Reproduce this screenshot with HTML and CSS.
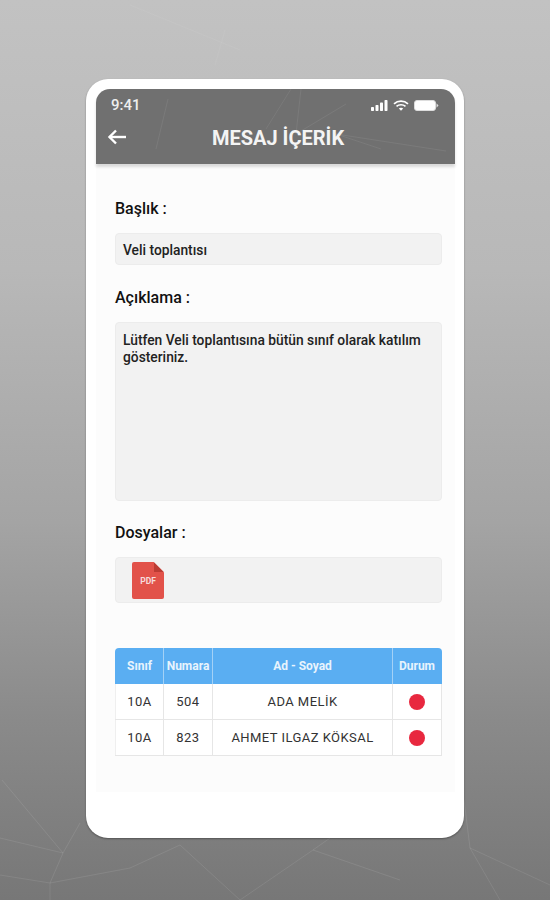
FILE: index.html
```html
<!DOCTYPE html>
<html lang="tr">

<head>
    <meta charset="UTF-8">
    <meta name="viewport" content="width=device-width, initial-scale=1.0">
    <title>Mesaj İçerik</title>
    <link rel="stylesheet" href="styles.css">
</head>

<body>
    <!-- faint web of lines on the backdrop -->
    <svg class="backdrop-lines" width="550" height="900" viewBox="0 0 550 900" fill="none" stroke="#fff" stroke-opacity="0.09">
        <path d="M2 780 L63 853 L80 823" />
        <path d="M0 838 L63 853 L50 883 L50 900" />
        <path d="M0 875 L50 883 L130 868" />
        <path d="M240 900 L313 850 L400 880 M130 868 L180 845 L240 900 M313 850 L330 838" />
        <path d="M470 848 L550 885 M470 848 L500 900 M464 800 L470 848" />
        <path d="M130 5 L240 50 M225 30 L215 65" stroke-opacity="0.05" />
    </svg>

    <div class="phone">
        <div class="app-header">
            <svg class="header-lines" width="359" height="75" viewBox="0 0 359 75" fill="none" stroke="#fff" stroke-opacity="0.07">
                <path d="M60 60 L72 10 M170 40 L195 0 M205 0 L200 45 L250 15 M285 60 L240 45 L350 62" />
            </svg>
            <div class="status-bar">
                <span class="status-time">9:41</span>
                <div class="status-icons">
                    <svg width="17" height="11" viewBox="0 0 17 11" fill="#fff">
                        <rect x="0" y="7" width="3" height="4" rx="0.7" />
                        <rect x="4.5" y="5" width="3" height="6" rx="0.7" />
                        <rect x="9" y="2.5" width="3" height="8.500" rx="0.7" />
                        <rect x="13.500" y="0" width="3" height="11" rx="0.7" />
                    </svg>
                    <svg width="16" height="11" viewBox="0 0 16 11" fill="none" stroke="#fff" stroke-width="1.7">
                        <path d="M1 3.800 C5 0.200 11 0.200 15 3.800" />
                        <path d="M3.500 6.300 C6 4.200 10 4.200 12.500 6.300" />
                        <path d="M8 10.800 L5.800 8.500 C7 7.500 9 7.500 10.200 8.500 Z" fill="#fff" stroke="none" />
                    </svg>
                    <svg width="25" height="11" viewBox="0 0 25 11">
                        <rect x="0.500" y="0.500" width="21" height="10" rx="2.500" fill="#fff" stroke="#ddd" />
                        <path d="M22.500 3.200 L24.500 5.500 L22.500 7.800 Z" fill="#ddd" />
                    </svg>
                </div>
            </div>
            <div class="title-bar">
                <svg class="back-icon" width="20" height="16" viewBox="0 0 20 16" fill="none" stroke="#fff" stroke-width="2.400">
                    <path d="M19 8 H2.500" />
                    <path d="M9 1.500 L2.500 8 L9 14.500" />
                </svg>
                <h1 class="page-title">MESAJ İÇERİK</h1>
            </div>
        </div>

        <div class="content">
            <div class="field-label">Başlık :</div>
            <div class="field-box title-box">Veli toplantısı</div>

            <div class="field-label">Açıklama :</div>
            <div class="field-box desc-box">Lütfen Veli toplantısına bütün sınıf olarak katılım gösteriniz.</div>

            <div class="field-label">Dosyalar :</div>
            <div class="field-box files-box">
                <div class="pdf-icon"><span class="pdf-text">PDF</span></div>
            </div>

            <div class="student-table">
                <div class="table-row table-head">
                    <div class="cell">Sınıf</div>
                    <div class="cell">Numara</div>
                    <div class="cell">Ad - Soyad</div>
                    <div class="cell">Durum</div>
                </div>
                <div class="table-row">
                    <div class="cell">10A</div>
                    <div class="cell">504</div>
                    <div class="cell">ADA MELİK</div>
                    <div class="cell"><span class="status-dot"></span></div>
                </div>
                <div class="table-row">
                    <div class="cell">10A</div>
                    <div class="cell">823</div>
                    <div class="cell">AHMET ILGAZ KÖKSAL</div>
                    <div class="cell"><span class="status-dot"></span></div>
                </div>
            </div>
        </div>
    </div>
</body>

</html>
```

FILE: styles.css
```css
* {
    box-sizing: border-box;
}

html,
body {
    margin: 0;
    height: 900px;
    overflow: hidden;
}

body {
    position: relative;
    font-family: Roboto, "Liberation Sans", sans-serif;
    padding-top: 79px;
    background: linear-gradient(180deg, #c2c2c2 0%, #b8b8b8 30%, #a4a4a4 58%, #8a8a8a 80%, #777 100%);
}

.backdrop-lines {
    position: absolute;
    top: 0;
    left: 0;
}

.phone {
    position: relative;
    width: 378px;
    height: 759px;
    margin-left: 86px;
    padding: 10px 9px 0 10px;
    background: #fff;
    border-radius: 22px;
    box-shadow: 0 1px 2px rgba(0, 0, 0, 0.35);
}

.app-header {
    position: relative;
    height: 75px;
    padding: 0 16px 0 15px;
    border-radius: 14px 14px 0 0;
    background: #707070;
    box-shadow: 0 3px 3px rgba(0, 0, 0, 0.14);
    color: #fff;
}

.header-lines {
    position: absolute;
    top: 0;
    left: 0;
}

.status-bar {
    position: relative;
    height: 32px;
    display: flex;
    align-items: center;
    justify-content: space-between;
}

.status-time {
    font-size: 15px;
    font-weight: 500;
    color: #eee;
}

.status-icons {
    display: flex;
    align-items: center;
    gap: 5px;
}

.title-bar {
    position: relative;
    height: 33px;
    padding-left: 6px;
    display: flex;
    align-items: center;
    justify-content: center;
}

.back-icon {
    position: absolute;
    left: -4px;
    top: 8px;
}

.page-title {
    margin: 0;
    font-size: 20px;
    font-weight: 700;
    color: #f4f4f4;
}

.content {
    height: 628px;
    padding: 35px 13px 0 19px;
    background: #fcfcfc;
}

.field-label {
    height: 20px;
    line-height: 20px;
    font-size: 16px;
    font-weight: 500;
    color: #111;
}

.field-box {
    margin-top: 14px;
    background: #f2f2f2;
    border: 1px solid #ececec;
    border-radius: 4px;
    font-size: 13.800px;
    font-weight: 500;
    color: #222;
}

.title-box {
    height: 32px;
    line-height: 32px;
    padding: 0 7px;
    margin-bottom: 23px;
}

.desc-box {
    height: 179px;
    padding: 9px 7px;
    line-height: 17px;
    margin-bottom: 22px;
}

.files-box {
    height: 46px;
    padding: 4px 16px;
}

.pdf-icon {
    position: relative;
    width: 32px;
    height: 37px;
    background: #e2524a;
    border-radius: 2px;
    clip-path: polygon(0 0, 68% 0, 100% 28%, 100% 100%, 0 100%);
    display: flex;
    align-items: center;
    justify-content: center;
}

.pdf-icon::after {
    content: "";
    position: absolute;
    top: 0;
    right: 0;
    width: 10px;
    height: 10px;
    background: #bb3c34;
    clip-path: polygon(0 0, 100% 100%, 0 100%);
}

.pdf-text {
    font-size: 8.500px;
    font-weight: 700;
    color: #f6dcdc;
}

.student-table {
    margin-top: 45px;
    border-radius: 4px 4px 0 0;
    background: #fff;
    font-size: 13px;
    letter-spacing: 0.45px;
    color: #333;
}

.table-row {
    display: grid;
    grid-template-columns: 49px 49px 180px 49px;
    height: 36px;
    border-bottom: 1px solid #e6e6e6;
}

.table-head {
    height: 36px;
    border-radius: 4px 4px 0 0;
    border-bottom: 0;
    background: #5aaef2;
    color: #e8f4fd;
    font-size: 12px;
    font-weight: 700;
    letter-spacing: 0;
}

.cell {
    display: flex;
    align-items: center;
    justify-content: center;
    border-right: 1px solid #e6e6e6;
    white-space: nowrap;
}

.cell:first-child {
    border-left: 1px solid #efefef;
}

.table-head .cell {
    border-color: #a3d1f6;
}

.table-head .cell:first-child,
.table-head .cell:last-child {
    border-color: transparent;
}

.table-head .cell:first-child {
    border-right-color: #a3d1f6;
}

.status-dot {
    width: 16px;
    height: 16px;
    border-radius: 50%;
    background: #e8283f;
}
```
